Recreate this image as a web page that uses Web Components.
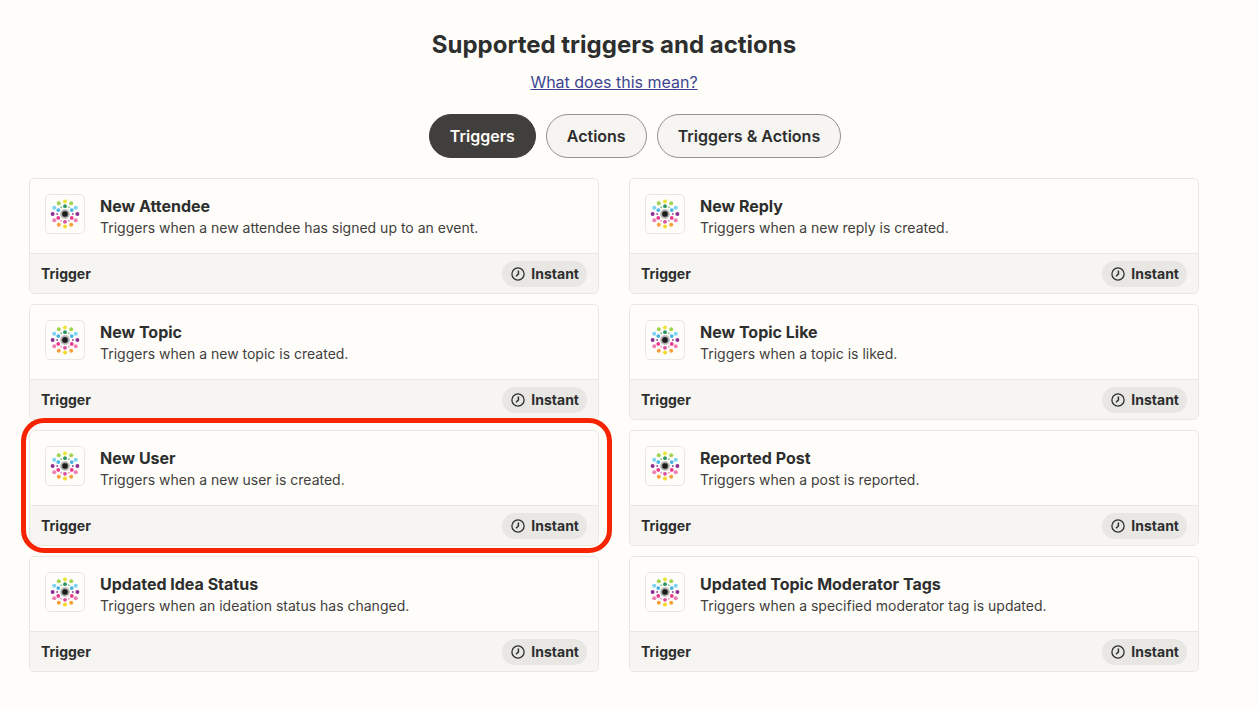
<!DOCTYPE html>
<html lang="en">
<head>
<meta charset="utf-8">
<title>Supported triggers and actions</title>
<style>
  body {
    margin: 0;
    background: #fffdf9;
    color: #2d2e2e;
    font-family: Inter, "Liberation Sans", sans-serif;
  }
</style>
</head>
<body>
<triggers-page></triggers-page>

<template id="page-template">
  <style>
    :host { display: block; padding: 28px 59px 38px 29px; }
    header { display: flex; flex-direction: column; align-items: center; }
    h2 { margin: 0; font-size: 24px; line-height: 34px; font-weight: 700; }
    a { margin-top: 8px; font-size: 16px; line-height: 24px; color: #3d4592; }
    nav { display: flex; justify-content: center; gap: 10px; margin: 20px 0; padding-left: 42px; }
    main { display: grid; grid-template-columns: 1fr 1fr; gap: 10px 30px; }
  </style>
  <header>
    <h2>Supported triggers and actions</h2>
    <a href="#meaning">What does this mean?</a>
  </header>
  <nav>
    <filter-pill selected>Triggers</filter-pill>
    <filter-pill>Actions</filter-pill>
    <filter-pill>Triggers &amp; Actions</filter-pill>
  </nav>
  <main>
    <trigger-card><span slot="name">New Attendee</span>Triggers when a new attendee has signed up to an event.</trigger-card>
    <trigger-card><span slot="name">New Reply</span>Triggers when a new reply is created.</trigger-card>
    <trigger-card><span slot="name">New Topic</span>Triggers when a new topic is created.</trigger-card>
    <trigger-card><span slot="name">New Topic Like</span>Triggers when a topic is liked.</trigger-card>
    <trigger-card highlighted><span slot="name">New User</span>Triggers when a new user is created.</trigger-card>
    <trigger-card><span slot="name">Reported Post</span>Triggers when a post is reported.</trigger-card>
    <trigger-card><span slot="name">Updated Idea Status</span>Triggers when an ideation status has changed.</trigger-card>
    <trigger-card><span slot="name">Updated Topic Moderator Tags</span>Triggers when a specified moderator tag is updated.</trigger-card>
  </main>
</template>

<template id="pill-template">
  <style>
    :host { display: block; }
    button {
      display: block; height: 44px; padding: 0 20px; box-sizing: border-box;
      border: 1px solid #95928e; border-radius: 22px; background: #f6f5f2;
      color: #2d2e2e; font: 600 16px/24px Inter, "Liberation Sans", sans-serif;
      white-space: nowrap; cursor: pointer;
    }
    :host([selected]) button { background: #413f3d; border-color: #413f3d; color: #fffdf9; }
  </style>
  <button type="button"><slot></slot></button>
</template>

<template id="logo-template">
  <style>
    :host {
      display: block; flex: none; width: 40px; height: 40px; box-sizing: border-box;
      border: 1px solid #e8e7e4; border-radius: 5px; background: #fffdf9;
    }
    svg { display: block; width: 100%; height: 100%; }
  </style>
  <svg viewBox="-19 -19 38 38" aria-hidden="true">
    <circle r="5" fill="#c4c4c3"/>
    <circle r="3.6" fill="#8a8a8a"/>
    <circle r="2.7" fill="#1b1b1c"/>
    <g id="dots"></g>
  </svg>
</template>

<template id="badge-template">
  <style>
    :host {
      display: flex; align-items: center; gap: 6px; height: 26px; padding: 0 8px 0 9px;
      border-radius: 13px; background: #e8e7e4; font-size: 14px; line-height: 20px; font-weight: 700;
    }
    svg { display: block; width: 14px; height: 14px; }
  </style>
  <svg viewBox="0 0 14 14" fill="none" stroke="#2d2e2e" aria-hidden="true">
    <circle cx="7" cy="7" r="6.1" stroke-width="1.3"/>
    <path d="M7.4 3.5V7L5 9.2" stroke-width="1.5"/>
  </svg>
  <slot></slot>
</template>

<template id="card-template">
  <style>
    :host { display: block; position: relative; }
    article { border: 1px solid #e8e7e4; border-radius: 5px; overflow: hidden; }
    .body { display: flex; gap: 15px; padding: 15px; }
    h3 { margin: 0; font-size: 16px; line-height: 24px; font-weight: 700; }
    p { margin: 0; font-size: 14px; line-height: 20px; color: #413f3d; }
    footer {
      display: flex; align-items: center; justify-content: space-between;
      height: 39px; padding: 0 11px; border-top: 1px solid #e8e7e4;
      background: #f6f5f2; font-size: 14px; line-height: 20px; font-weight: 700;
    }
    :host([highlighted])::after {
      content: ""; position: absolute; inset: -12px -13px -7px -8px; z-index: 1;
      border: 5px solid #f62400; border-radius: 23px; pointer-events: none;
    }
  </style>
  <article>
    <div class="body">
      <app-logo></app-logo>
      <div>
        <h3><slot name="name"></slot></h3>
        <p><slot></slot></p>
      </div>
    </div>
    <footer><span>Trigger</span><instant-badge>Instant</instant-badge></footer>
  </article>
</template>

<script>
  class TemplateElement extends HTMLElement {
    constructor() {
      super();
      const template = document.getElementById(this.constructor.templateId);
      this.attachShadow({ mode: "open" }).append(template.content.cloneNode(true));
    }
  }

  class FilterPill extends TemplateElement {
    static templateId = "pill-template";
    connectedCallback() {
      this.shadowRoot.querySelector("button").setAttribute("aria-pressed", this.hasAttribute("selected"));
    }
  }

  class AppLogo extends TemplateElement {
    static templateId = "logo-template";
    // Colours run clockwise from the top of each ring.
    static outer = ["#ebe337", "#9dd351", "#7dd3f3", "#8d3091", "#ef7fb4", "#f6a03c",
                    "#f6d72b", "#f6a03c", "#ef7fb4", "#8d3091", "#7dd3f3", "#9dd351"];
    static inner = ["#2c9763", "#8cc9a0", "#45b3e3", "#a04fa4", "#e8378f", "#f5a0c8",
                    "#dc4c9f", "#f5a0c8", "#e8378f", "#a04fa4", "#45b3e3", "#8cc9a0"];
    connectedCallback() {
      const dots = this.shadowRoot.getElementById("dots");
      const ring = (colors, distance, radiusOf) => colors.forEach((color, i) => {
        const angle = i * Math.PI / 6;
        const dot = document.createElementNS("http://www.w3.org/2000/svg", "circle");
        dot.setAttribute("cx", (distance * Math.sin(angle)).toFixed(2));
        dot.setAttribute("cy", (-distance * Math.cos(angle)).toFixed(2));
        dot.setAttribute("r", radiusOf(i));
        dot.setAttribute("fill", color);
        dots.append(dot);
      });
      ring(AppLogo.outer, 12.4, () => 2);
      ring(AppLogo.inner, 7.8, i => i % 2 ? 1 : 1.9);
    }
  }

  class InstantBadge extends TemplateElement { static templateId = "badge-template"; }
  class TriggerCard extends TemplateElement { static templateId = "card-template"; }
  class TriggersPage extends TemplateElement { static templateId = "page-template"; }

  customElements.define("filter-pill", FilterPill);
  customElements.define("app-logo", AppLogo);
  customElements.define("instant-badge", InstantBadge);
  customElements.define("trigger-card", TriggerCard);
  customElements.define("triggers-page", TriggersPage);
</script>
</body>
</html>
